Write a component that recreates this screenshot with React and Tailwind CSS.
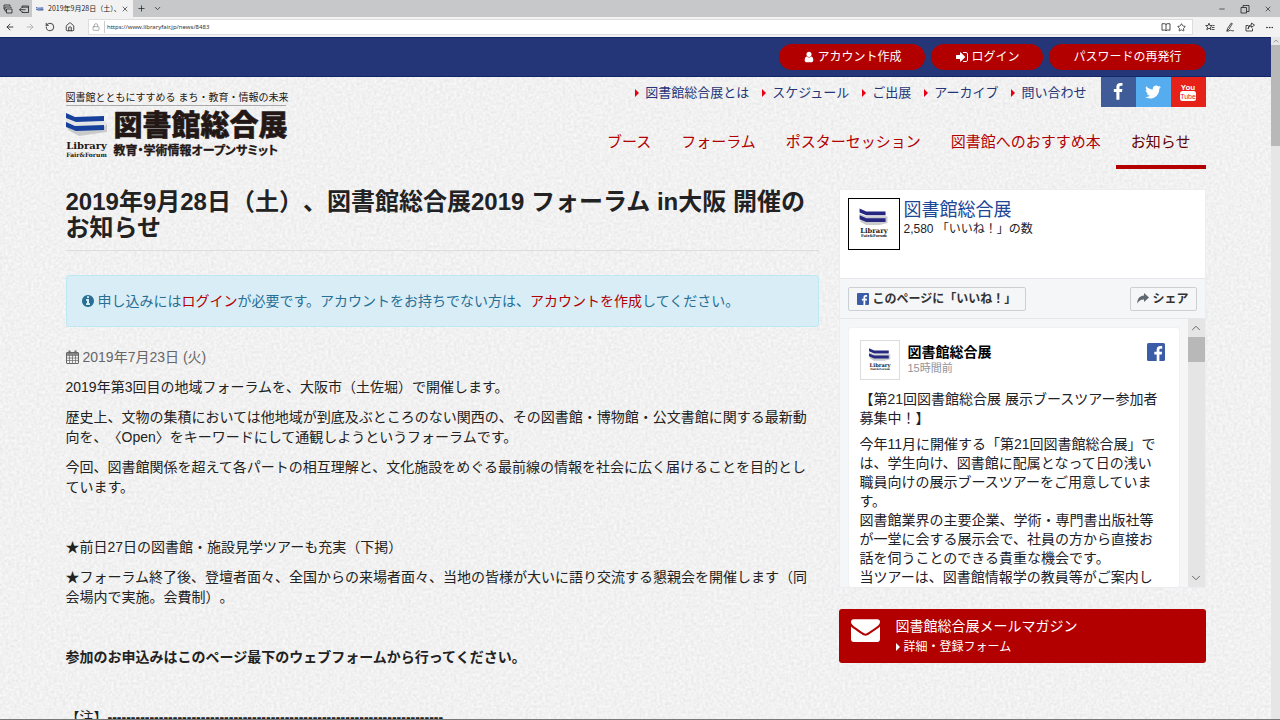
import {
  ArrowLeft,
  ArrowRight,
  ChevronDown,
  ChevronUp,
  Ellipsis,
  House,
  Lock,
  Minus,
  Plus,
  RotateCw,
  Star,
  X,
} from "lucide-react";

const ICONS = {
  user: "M1536 1399q0 109-62.5 187t-150.5 78h-854q-88 0-150.5-78t-62.5-187q0-85 8.5-160.5t31.5-152 58.5-131 94-89 134.5-34.5q131 128 313 128t313-128q76 0 134.5 34.5t94 89 58.5 131 31.5 152 8.5 160.5zm-256-887q0 159-112.5 271.5t-271.5 112.5-271.5-112.5-112.5-271.5 112.5-271.5 271.5-112.5 271.5 112.5 112.5 271.5z",
  signIn: "M1312 896q0 26-19 45l-544 544q-19 19-45 19t-45-19-19-45v-288h-448q-26 0-45-19t-19-45v-384q0-26 19-45t45-19h448v-288q0-26 19-45t45-19 45 19l544 544q19 19 19 45zm352-352v704q0 119-84.5 203.5t-203.5 84.5h-320q-13 0-22.5-9.5t-9.5-22.5q-1-4-1-20t-.5-26.5 3-23.5 10-19.5 20.5-6.5h320q66 0 113-47t47-113v-704q0-66-47-113t-113-47h-312l-11.5-1-11.5-3-8-5.5-7-9-2-13.5q-1-4-1-20t-.5-26.5 3-23.5 10-19.5 20.5-6.5h320q119 0 203.5 84.5t84.5 203.5z",
  facebook: "M1343 12v264h-157q-86 0-116 36t-30 108v189h293l-39 296h-254v759h-306v-759h-255v-296h255v-218q0-186 104-288.5t277-102.5q147 0 228 12z",
  twitter: "M1684 408q-67 98-162 167 1 14 1 42 0 130-38 259.5t-115.5 248.5-184.5 210.5-258 146-323 54.5q-271 0-496-145 35 4 78 4 225 0 401-138-105-2-188-64.5t-114-159.5q33 5 61 5 43 0 85-11-112-23-185.5-111.5t-73.5-205.5v-4q68 38 146 41-66-44-105-115t-39-154q0-88 44-163 121 149 294.5 238.5t371.5 99.5q-8-38-8-74 0-134 94.5-228.5t228.5-94.5q140 0 236 102 109-21 205-78-37 115-142 178 93-10 186-50z",
  info: "M1152 1376v-160q0-14-9-23t-23-9h-96v-512q0-14-9-23t-23-9h-320q-14 0-23 9t-9 23v160q0 14 9 23t23 9h96v320h-96q-14 0-23 9t-9 23v160q0 14 9 23t23 9h448q14 0 23-9t9-23zm-128-896v-160q0-14-9-23t-23-9h-192q-14 0-23 9t-9 23v160q0 14 9 23t23 9h192q14 0 23-9t9-23zm640 416q0 209-103 385.5t-279.5 279.5-385.5 103-385.5-103-279.5-279.5-103-385.5 103-385.5 279.5-279.5 385.5-103 385.5 103 279.5 279.5 103 385.5z",
  envelope: "M1792 710v794q0 66-47 113t-113 47h-1472q-66 0-113-47t-47-113v-794q44 49 101 87 362 246 497 345 57 42 92.5 65.5t94.5 48 110 24.5h2q51 0 110-24.5t94.5-48 92.5-65.5q170-123 498-345 57-39 100-87zm0-294q0 79-49 151t-122 123q-376 261-468 325-10 7-42.5 31t-54 38.5-52 32.5-57.5 27-50 9h-2q-23 0-50-9t-57.5-27-52-32.5-54-38.5-42.5-31q-91-64-262-182.5t-205-142.5q-62-42-117-115.5t-55-136.5q0-78 41.5-130t118.5-52h1472q65 0 112.5 47t47.5 113z",
};

// 10x10 line drawings for the browser toolbar
const LINES = {
  tabs: "M1 1h6v1M1 1v4h1M2 3h6v1M2 3v4h1M3.5 5h5.500v4h-5.500z",
  saveTab: "M3 2h6.500v6.500h-6.500v-1.500M3 2v2M3 3.200h6.500M6.500 5.700h-6M2.500 4l-2 1.700l2 1.700",
  restore: "M1 3.500h5.500v5.500h-5.500zM3 3.500v-2h6v6h-2.500",
  book: "M5 2v6.500M5 2.200Q3.500 1.300 1 1.800V8.200Q3.500 7.700 5 8.500Q6.500 7.700 9 8.200V1.800Q6.500 1.300 5 2.200z",
  favorites: "M4 1.200l.9 2.300h2.300l-1.800 1.600l.6 2.600l-2-1.500l-2.200 1.500l.8-2.600l-1.900-1.600h2.400zM6.800 5.500h2.700M6.800 7.500h2.700M7.500 3.500h2",
  pen: "M6.300 1l1 .6L4 7.200L2 8.800L2.600 6.400zM1.300 9Q4 9.500 5.200 8.300Q6 7.800 6.300 8.600Q7 9 9 8.700",
  share: "M3.500 3.500h-2.500v5.500h6.500v-2.500M3 7Q3.400 4 6.500 3.800V5.400L9.500 3.100L6.500 1V2.500Q3.200 3 3 7z",
};

const subNav = ["図書館総合展とは", "スケジュール", "ご出展", "アーカイブ", "問い合わせ"];
const mainNav = ["ブース", "フォーラム", "ポスターセッション", "図書館へのおすすめ本", "お知らせ"];

const Icon = ({ name, className }) => (
  <svg viewBox="0 0 1792 1792" fill="currentColor" className={className} aria-hidden="true">
    <path d={ICONS[name]} />
  </svg>
);

const LineIcon = ({ name }) => (
  <svg viewBox="0 0 10 10" fill="none" stroke="currentColor" strokeWidth="0.8" className="w-[10px] h-[10px]" aria-hidden="true">
    <path d={LINES[name]} />
  </svg>
);

const Caret = ({ className }) => (
  <svg viewBox="0 0 4 8" fill="currentColor" className={className} aria-hidden="true">
    <path d="M0 0L4 4L0 8Z" />
  </svg>
);

const CalendarIcon = () => (
  <svg viewBox="0 0 13 14" fill="none" stroke="currentColor" className="w-[13px] h-[14px]" aria-hidden="true">
    <rect x="0.5" y="2.5" width="12" height="11" rx="0.5" />
    <path d="M1 5.500h11M1 8h11M1 10.500h11M3.500 5v8M6.500 5v8M9.500 5v8" strokeWidth="0.7" />
    <path d="M1 4h11" strokeWidth="1.500" />
    <path d="M3.500 0.500v3M9.500 0.500v3" strokeWidth="2" />
  </svg>
);

const ShareArrow = () => (
  <svg viewBox="0 0 12 11" fill="currentColor" className="w-3 h-[11px]" aria-hidden="true">
    <path d="M7 0L12 4.500L7 9V6.400C4 6.200 2 7.600 0.300 10.600C0.200 6 2.600 2.800 7 2.600Z" />
  </svg>
);

const FacebookSquare = ({ className }) => (
  <svg viewBox="0 0 18 18" className={className} aria-hidden="true">
    <rect width="18" height="18" rx="1.5" fill="#3b5da8" />
    <path d="M12.4 18v-6.600h2.300l.4-2.700h-2.700V7.100c0-.9.3-1.400 1.400-1.400h1.400V3.200c-.3 0-1.100-.1-2-.1-2.100 0-3.500 1.200-3.500 3.500v2.100H7.300v2.700h2.400V18z" fill="#fff" />
  </svg>
);

const YoutubeIcon = () => (
  <svg viewBox="0 0 18 20" className="w-[18px] h-5" aria-hidden="true">
    <text x="9" y="8" textAnchor="middle" fontSize="8" fontWeight="700" fill="#fff" fontFamily="Liberation Sans, sans-serif">You</text>
    <rect x="1" y="9" width="16" height="10" rx="2.5" fill="#fff" />
    <text x="9" y="17" textAnchor="middle" fontSize="7" fill="#e62117" fontFamily="Liberation Sans, sans-serif">Tube</text>
  </svg>
);

const BookMark = ({ className }) => (
  <svg viewBox="0 0 42 24" className={className} aria-hidden="true">
    <path d="M2 16L9 18L38 12H41V20L13 24L2 18Z" fill="#c9cacb" />
    <path d="M0 6L10 10H40V14H9L0 10Z" fill="#e3e4e5" />
    <path d="M0 1L9 5L38 4V9L10 10L0 6Z" fill="#173f9c" />
    <path d="M0 10L9 14L38 13V18L10 19L0 15Z" fill="#173f9c" />
  </svg>
);

const Avatar = ({ className }) => (
  <svg viewBox="0 0 52 52" className={className} role="img" aria-label="Library Fair & Forum">
    <rect width="52" height="52" fill="#fff" />
    <path d="M11 15L18 18H40V25L32 27L18 27L12 24Z" fill="#c9cacb" />
    <path d="M11 10L18 13H38V17H18L11 14Z" fill="#27277f" />
    <path d="M11 17L18 20H38V24H18L11 21Z" fill="#27277f" />
    <text x="26" y="35" textAnchor="middle" fontSize="7" fontWeight="700" fill="#222" fontFamily="DejaVu Serif, serif">Library</text>
    <text x="26" y="40" textAnchor="middle" fontSize="4" fontWeight="700" fill="#222" fontFamily="DejaVu Serif, serif">Fair&amp;Forum</text>
  </svg>
);

const PaperTexture = () => (
  <svg className="absolute inset-0 w-full h-full -z-10" aria-hidden="true">
    <filter id="paper" x="0" y="0" width="100%" height="100%" colorInterpolationFilters="sRGB">
      <feTurbulence type="fractalNoise" baseFrequency="0.35" numOctaves="2" seed="4" />
      <feColorMatrix values="0.1 0 0 0 0.895  0.1 0 0 0 0.895  0.1 0 0 0 0.895  0 0 0 0 1" />
    </filter>
    <rect width="100%" height="100%" filter="url(#paper)" />
  </svg>
);

const BrowserChrome = () => (
  <div className="shrink-0 text-[#222]">
    <div className="h-[17px] flex items-stretch bg-[#c6c8ca]">
      <div className="w-8 flex items-center justify-center gap-[6px]">
        <button aria-label="タブの一覧"><LineIcon name="tabs" /></button>
        <button aria-label="タブを保存"><LineIcon name="saveTab" /></button>
      </div>
      <div className="w-[101px] flex items-center justify-between pl-1 pr-1 bg-[#f2f2f2]">
        <div className="flex items-center gap-1">
          <BookMark className="w-2 h-[6px] shrink-0" />
          <span className="whitespace-nowrap text-[7px] leading-[17px] font-['Noto_Sans_CJK_JP',sans-serif] [text-spacing-trim:normal]">
            2019年9月28日（土）、
          </span>
        </div>
        <button aria-label="タブを閉じる"><X size={8} /></button>
      </div>
      <div className="flex-1 flex items-center gap-[7px] pl-1">
        <button aria-label="新しいタブ"><Plus size={9} /></button>
        <button aria-label="タブのプレビュー"><ChevronDown size={9} /></button>
      </div>
      <div className="flex items-center gap-[14px] pr-2">
        <button aria-label="最小化"><Minus size={8} /></button>
        <button aria-label="元に戻す"><LineIcon name="restore" /></button>
        <button aria-label="閉じる"><X size={8} /></button>
      </div>
    </div>
    <div className="h-5 flex items-center bg-[#f2f2f2]">
      <div className="w-[88px] flex items-center gap-[10px] pl-[5px]">
        <button aria-label="戻る"><ArrowLeft size={10} /></button>
        <button aria-label="進む" className="text-[#aaa]"><ArrowRight size={10} /></button>
        <button aria-label="更新"><RotateCw size={10} className="-scale-x-100" /></button>
        <button aria-label="ホーム"><House size={10} /></button>
      </div>
      <div className="flex-1 h-4 flex items-center bg-white border border-[#ddd] px-[3px]">
        <Lock size={8} className="text-[#888] mr-1" />
        <input
          aria-label="アドレス"
          defaultValue="https://www.libraryfair.jp/news/8483"
          className="flex-1 h-3 border-l border-[#ccc] pl-[2px] text-[6px] text-[#333] font-['Noto_Sans',sans-serif] outline-none"
        />
        <div className="flex items-center gap-[6px] pr-[3px]">
          <button aria-label="読み取りビュー"><LineIcon name="book" /></button>
          <button aria-label="お気に入りに追加"><Star size={9} /></button>
        </div>
      </div>
      <div className="flex items-center gap-[10px] pl-3 pr-[6px]">
        <button aria-label="お気に入り"><LineIcon name="favorites" /></button>
        <button aria-label="ノートの追加"><LineIcon name="pen" /></button>
        <button aria-label="共有"><LineIcon name="share" /></button>
        <button aria-label="設定"><Ellipsis size={9} /></button>
      </div>
    </div>
  </div>
);

const TopBar = () => (
  <div className="h-10 bg-[#243678] border-y border-[#11266b]">
    <div className="max-w-[1140px] mx-auto h-full flex items-center justify-end gap-[6px] text-white text-xs">
      <a href="#signup" className="h-[26px] px-6 flex items-center gap-[2px] rounded-full bg-[#b20000]">
        <Icon name="user" className="w-3 h-3" />
        アカウント作成
      </a>
      <a href="#login" className="h-[26px] px-6 flex items-center gap-[2px] rounded-full bg-[#b20000]">
        <Icon name="signIn" className="w-[14px] h-[14px]" />
        ログイン
      </a>
      <a href="#reset" className="h-[26px] px-6 flex items-center rounded-full bg-[#b20000]">
        パスワードの再発行
      </a>
    </div>
  </div>
);

const Logo = () => (
  <a href="#home" className="w-[220px] mt-[14px] text-[#231815] whitespace-nowrap">
    <div className="text-[10px] leading-[14px] border-b border-[#aaa]">
      図書館とともにすすめる まち・教育・情報の未来
    </div>
    <div className="flex gap-[6px] pt-1">
      <div className="w-[42px]">
        <BookMark className="w-[42px] h-6 mt-[2px]" />
        <div className="font-['DejaVu_Serif',serif] font-bold text-center">
          <div className="text-[10px] leading-3 pt-1">Library</div>
          <div className="text-[6px] leading-[6px]">Fair&amp;Forum</div>
        </div>
      </div>
      <div>
        <div className="text-[29px] leading-8 font-black [-webkit-text-stroke:0.5px]">図書館総合展</div>
        <div className="text-xs leading-[18px] font-bold [-webkit-text-stroke:0.3px] [font-feature-settings:'palt']">教育・学術情報オープンサミット</div>
      </div>
    </div>
  </a>
);

const Header = () => (
  <header className="max-w-[1140px] mx-auto h-[91px] flex justify-between items-start">
    <Logo />
    <div>
      <div className="flex justify-end">
        <nav className="flex gap-[13px] pr-[14px] leading-8 text-[13px] text-[#243678]">
          {subNav.map((label) => (
            <a key={label} href="#sub" className="flex items-center gap-[6px]">
              <Caret className="w-1 h-2 text-[#e60012]" />
              {label}
            </a>
          ))}
        </nav>
        <a href="#facebook" aria-label="Facebook" className="w-[35px] h-[30px] flex items-center justify-center bg-[#3f5b98] text-white">
          <Icon name="facebook" className="w-[18px] h-[18px]" />
        </a>
        <a href="#twitter" aria-label="Twitter" className="w-[35px] h-[30px] flex items-center justify-center bg-[#55acee] text-white">
          <Icon name="twitter" className="w-[18px] h-[18px]" />
        </a>
        <a href="#youtube" aria-label="YouTube" className="w-[35px] h-[30px] flex items-center justify-center bg-[#e62117]">
          <YoutubeIcon />
        </a>
      </div>
      <nav className="flex justify-end mt-[10px] text-[15px] leading-[46px]">
        {mainNav.map((label) => (
          <a
            key={label}
            href="#main"
            className={
              label === "お知らせ"
                ? "px-[15px] text-[#5e0000] border-b-4 border-[#b20000]"
                : "px-[15px] text-[#b20000] border-b-4 border-transparent"
            }
          >
            {label}
          </a>
        ))}
      </nav>
    </div>
  </header>
);

const Article = () => (
  <article className="min-w-0 text-sm leading-5 text-[#222]">
    <h1 className="mt-[21px] pb-[9px] border-b border-[#ddd] text-2xl leading-[26px] font-bold">
      2019年9月28日（土）、図書館総合展2019 フォーラム in大阪 開催のお知らせ
    </h1>
    <div className="mt-6 mb-5 px-[14px] py-[15px] flex items-center gap-[3px] rounded-[3px] border border-[#bce8f1] bg-[#d9edf7] text-[#276f94]">
      <Icon name="info" className="w-[14px] h-[14px] shrink-0" />
      <p>
        申し込みには<a href="#login" className="text-[#b20000]">ログイン</a>が必要です。アカウントをお持ちでない方は、
        <a href="#signup" className="text-[#b20000]">アカウントを作成</a>してください。
      </p>
    </div>
    <div className="flex flex-col gap-[10px]">
      <p className="flex items-center gap-1 text-[#666]">
        <CalendarIcon />
        2019年7月23日 (火)
      </p>
      <p>2019年第3回目の地域フォーラムを、大阪市（土佐堀）で開催します。</p>
      <p>
        歴史上、文物の集積においては他地域が到底及ぶところのない関西の、その図書館・博物館・公文書館に関する最新動向を、〈Open〉をキーワードにして通観しようというフォーラムです。
      </p>
      <p>
        今回、図書館関係を超えて各パートの相互理解と、文化施設をめぐる最前線の情報を社会に広く届けることを目的としています。
      </p>
      <p>&nbsp;</p>
      <p>★前日27日の図書館・施設見学ツアーも充実（下掲）</p>
      <p>
        ★フォーラム終了後、登壇者面々、全国からの来場者面々、当地の皆様が大いに語り交流する懇親会を開催します（同会場内で実施。会費制）。
      </p>
      <p>&nbsp;</p>
      <p className="font-bold">参加のお申込みはこのページ最下のウェブフォームから行ってください。</p>
      <p>&nbsp;</p>
      <p>
        【注】<b>{"-".repeat(72)}</b>
      </p>
    </div>
  </article>
);

const PageWidget = () => (
  <section className="h-[399px] flex flex-col border border-[#ebedf0] bg-[#f5f6f7] overflow-hidden">
    <div className="h-[88px] shrink-0 flex gap-1 p-2 bg-white">
      <Avatar className="w-[52px] h-[52px] border border-black" />
      <div>
        <a href="#page" className="block text-lg leading-6 text-[#1d4696]">図書館総合展</a>
        <p className="text-xs leading-[14px] text-[#1d2129]">2,580 「いいね！」の数</p>
      </div>
    </div>
    <div className="h-[41px] shrink-0 flex items-center justify-between px-2 border-y border-[#e5e7ea] text-xs font-bold text-[#333]">
      <button className="w-[178px] h-6 px-2 flex items-center gap-1 whitespace-nowrap rounded-[2px] border border-[#ccd0d5]">
        <FacebookSquare className="w-3 h-3" />
        このページに「いいね！」
      </button>
      <button className="w-[67px] h-6 flex items-center justify-center gap-[3px] rounded-[2px] border border-[#ccd0d5]">
        <span className="text-[#606770]"><ShareArrow /></span>
        シェア
      </button>
    </div>
    <div className="flex-1 min-h-0 flex">
      <div className="flex-1 px-2 pt-2 overflow-hidden">
        <div className="rounded-[3px] bg-white px-[11px] pt-3 border border-[#f0f1f2] text-sm leading-[19px] text-[#1d2129] whitespace-nowrap">
          <div className="flex gap-2">
            <Avatar className="w-10 h-10 border border-[#ddd]" />
            <div className="flex-1 pt-1">
              <a href="#page" className="block font-bold leading-4 text-black">図書館総合展</a>
              <p className="text-[11px] leading-4 text-[#90949c]">15時間前</p>
            </div>
            <FacebookSquare className="w-[18px] h-[18px] mt-[3px] mr-[3px]" />
          </div>
          <p className="mt-[10px]">
            【第21回図書館総合展 展示ブースツアー参加者<br />募集中！】
          </p>
          <p className="mt-[7px]">
            今年11月に開催する「第21回図書館総合展」で<br />
            は、学生向け、図書館に配属となって日の浅い<br />
            職員向けの展示ブースツアーをご用意していま<br />
            す。<br />
            図書館業界の主要企業、学術・専門書出版社等<br />
            が一堂に会する展示会で、社員の方から直接お<br />
            話を伺うことのできる貴重な機会です。<br />
            当ツアーは、図書館情報学の教員等がご案内し
          </p>
        </div>
      </div>
      <div className="w-[17px] flex flex-col items-center justify-between bg-[#e5e5e5] text-[#555]">
        <div className="w-full flex flex-col items-center">
          <ChevronUp size={14} strokeWidth={1.5} className="my-[2px]" />
          <div className="w-full h-[25px] bg-[#b8b8b8]" />
        </div>
        <ChevronDown size={14} strokeWidth={1.5} className="my-[2px]" />
      </div>
    </div>
  </section>
);

const MailMagazine = () => (
  <a href="#magazine" className="mt-[21px] h-[54px] px-3 py-[6px] flex gap-4 rounded-[3px] bg-[#b20000] text-white">
    <Icon name="envelope" className="w-[29px] h-[29px]" />
    <div>
      <p className="text-sm leading-[22px]">図書館総合展メールマガジン</p>
      <p className="flex items-center gap-1 text-xs leading-5">
        <Caret className="w-1 h-2" />
        詳細・登録フォーム
      </p>
    </div>
  </a>
);

const App = () => {
  return (
    <div
      lang="ja"
      className="h-screen flex flex-col overflow-hidden border-b border-[#777] font-['Liberation_Sans','Noto_Sans_CJK_JP',sans-serif] [text-spacing-trim:space-all]"
    >
      <BrowserChrome />
      <div className="flex-1 min-h-0 flex">
        <div className="relative isolate flex-1 min-w-0 overflow-hidden">
          <PaperTexture />
          <TopBar />
          <Header />
          <main className="max-w-[1140px] mx-auto grid grid-cols-[minmax(0,1fr)_367px] gap-5">
            <Article />
            <aside className="pt-[21px]">
              <PageWidget />
              <MailMagazine />
            </aside>
          </main>
        </div>
        <div className="w-[9px] flex flex-col items-center bg-[#e6e6e6] text-[#777]">
          <ChevronUp size={8} />
          <div className="w-full h-[101px] bg-[#b8b8b8]" />
        </div>
      </div>
    </div>
  );
};

export default App;
